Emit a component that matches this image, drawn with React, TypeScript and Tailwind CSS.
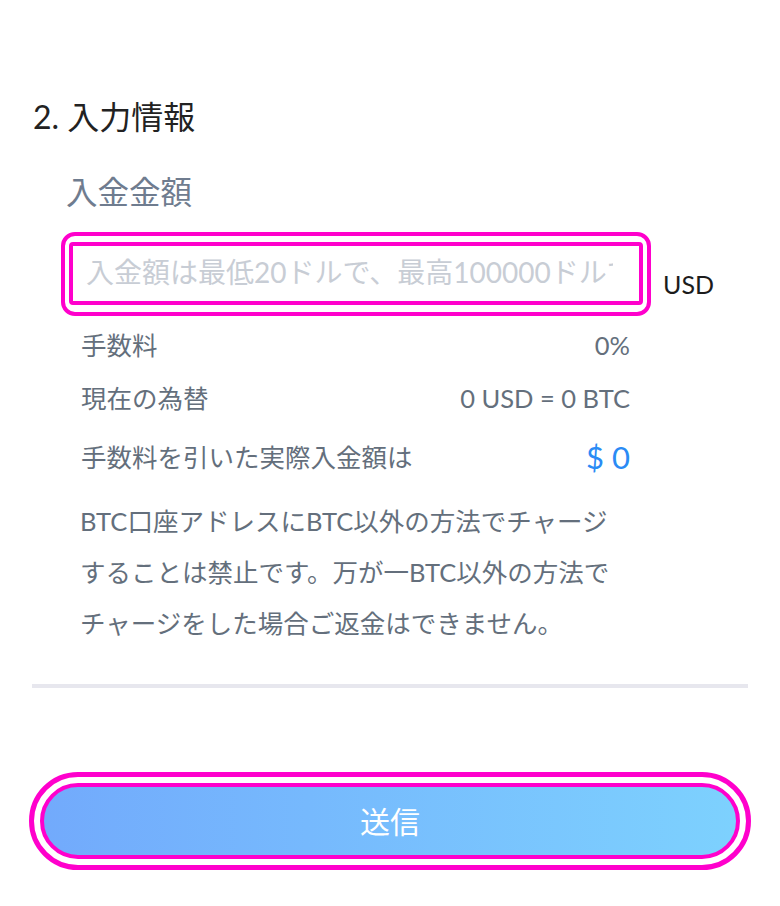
const font = {
  fontFamily: '"Lato", "Noto Sans CJK JP", sans-serif',
};

const rows = [
  { label: "手数料", value: "0%" },
  { label: "現在の為替", value: "0 USD = 0 BTC" },
];

export default function App() {
  return (
    <div
      className="w-[780px] h-[906px] bg-white flex flex-col overflow-hidden"
      style={font}
    >
      <h2 className="ml-[33px] mt-[96px] text-[32px] leading-[42px] text-[#222222]">
        2. 入力情報
      </h2>

      <h3 className="ml-[66px] mt-[34px] text-[31.5px] leading-[40px] text-[#6f7c8f]">
        入金金額
      </h3>

      <div className="ml-[61px] mt-[20px] flex flex-row items-center">
        <div className="w-[590px] h-[84px] rounded-[14px] border-4 border-[#ff00cc] px-[4px] pt-[6px] pb-[7px]">
          <input
            className="w-full h-full rounded-[4px] border-4 border-[#ff00cc] pl-[13px] pr-[26px] pb-[3px] text-[28px] text-[#333] placeholder:text-[#c8cdd5] outline-none"
            placeholder="入金額は最低20ドルで、最高100000ドルです"
            style={font}
          />
        </div>
        <span className="ml-[12px] mt-[22px] text-[25px] text-[#1c1c1c]">
          USD
        </span>
      </div>

      <div className="ml-[81px] w-[549px] mt-[3px] flex flex-col text-[25.5px] text-[#646f7c]">
        {rows.map((row) => (
          <div
            key={row.label}
            className="flex flex-row justify-between items-center h-[53px]"
          >
            <span>{row.label}</span>
            <span>{row.value}</span>
          </div>
        ))}
        <div className="flex flex-row justify-between items-center h-[64px]">
          <span>手数料を引いた実際入金額は</span>
          <span className="text-[31px] text-[#2a8bf5]">$ 0</span>
        </div>
        <p className="mt-[7px] -ml-[1px] w-[548px] leading-[51px]">
          BTC口座アドレスにBTC以外の方法でチャージすることは禁止です。万が一BTC以外の方法でチャージをした場合ご返金はできません。
        </p>
      </div>

      <div className="mx-[32px] mt-[35px] h-[4px] bg-[#e7e7ee]" />

      <div className="mx-[29px] mt-[84px] h-[98px] rounded-full border-[5px] border-[#ff00cc] p-[6px]">
        <button
          className="w-full h-full rounded-full border-4 border-[#ff00cc] bg-gradient-to-r from-[#72aafc] to-[#7dd1fe] text-white text-[30px]"
          style={font}
        >
          送信
        </button>
      </div>
    </div>
  );
}
